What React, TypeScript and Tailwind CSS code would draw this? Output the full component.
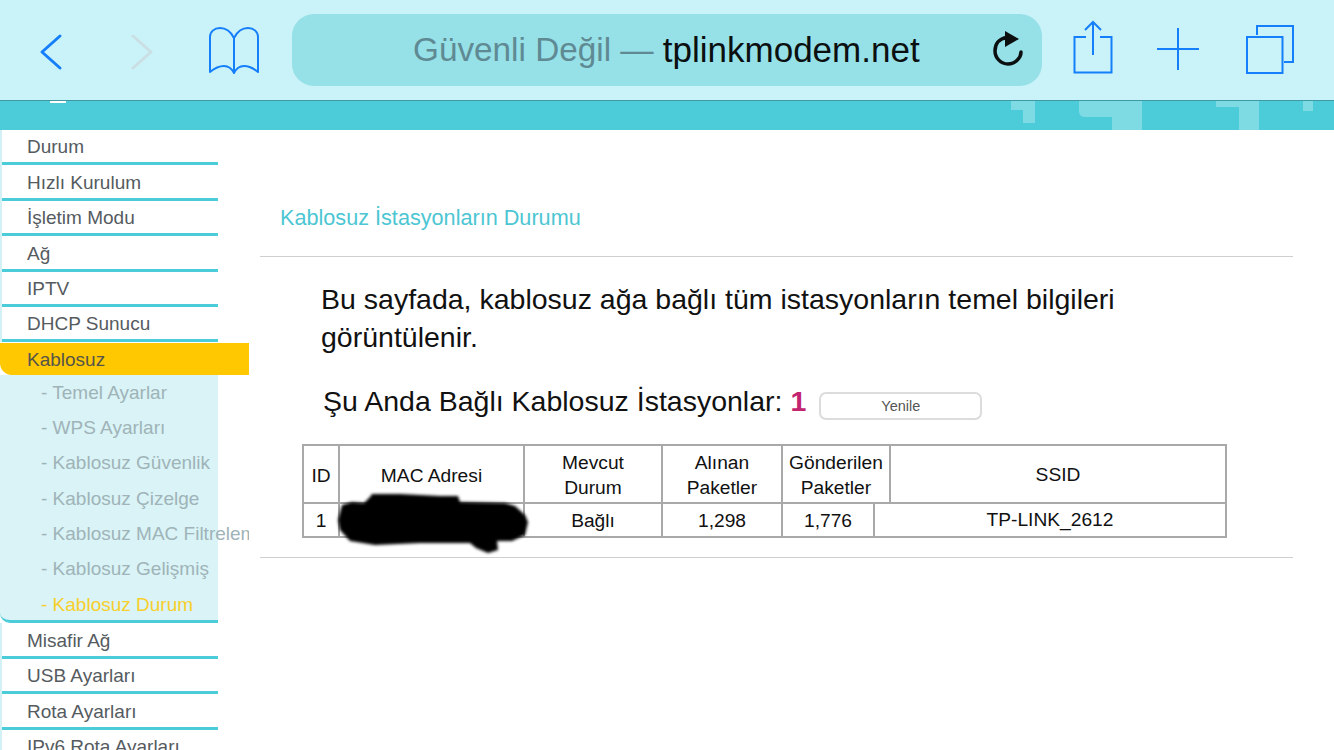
const topItems = ['Durum', 'Hızlı Kurulum', 'İşletim Modu', 'Ağ', 'IPTV', 'DHCP Sunucu']
const subItems = ['Temel Ayarlar', 'WPS Ayarları', 'Kablosuz Güvenlik', 'Kablosuz Çizelge', 'Kablosuz MAC Filtreleme', 'Kablosuz Gelişmiş']
const bottomItems = ['Misafir Ağ', 'USB Ayarları', 'Rota Ayarları', 'IPv6 Rota Ayarları']

function Toolbar() {
  return (
    <div className="relative h-[101px] shrink-0 border-b border-[#3f9aa6] bg-[#c9f3f8]">
      <svg className="absolute inset-0" width="1334" height="100" fill="none" stroke="#147efb" strokeWidth="2">
        {/* back / forward */}
        <path d="M60 36 42 52 60 68" strokeWidth="3" strokeLinecap="round" strokeLinejoin="round" />
        <path d="M133 36 151 52 133 68" stroke="#cadfe4" strokeWidth="3" strokeLinecap="round" strokeLinejoin="round" />
        {/* bookmarks */}
        <path d="M234 38c-3-6-8-10-14-10-6 0-10 4-10 9v35c6-5 10-6 14-6 5 0 8 3 10 7 2-4 5-7 10-7 4 0 8 1 14 6V37c0-5-4-9-10-9-6 0-11 4-14 10Zm0 0v35" strokeLinejoin="round" />
        {/* share */}
        <path d="M1086 37h-11.500v35.500h37V37H1100" />
        <path d="M1093 55V23M1085 30l8-8 8 8" />
        {/* new tab */}
        <path d="M1178 28v42M1157 49h42" />
        {/* tabs */}
        <path d="M1247 37h35.500v36H1247z" />
        <path d="M1257 35V26h36v36h-9" />
      </svg>
      <div className="absolute left-[292px] top-[14px] flex h-[72px] w-[750px] items-center rounded-[22px] bg-[#96e0e7] pl-[121px] font-['Liberation_Sans',sans-serif]">
        <span className="text-[33.300px] text-[#5f8a93]">Güvenli Değil —&nbsp;</span>
        <span className="text-[35px] text-[#0b0f10]">tplinkmodem.net</span>
        <svg className="absolute left-[700px] top-[16px]" width="36" height="40" viewBox="0 0 36 40" fill="none">
          <path d="M15 7.500C7 8.500 3 14 3 21c0 7 6 13 13 13s13-6 13-12" stroke="#0b0f10" strokeWidth="3.500" strokeLinecap="round" />
          <path d="M13 1l14 8-14 8z" fill="#0b0f10" />
        </svg>
      </div>
    </div>
  )
}

function HeaderBand() {
  return (
    <div className="relative h-[29px] shrink-0 bg-[#4cccd8]">
      <div className="absolute left-[50px] top-0 h-[2px] w-[16px] bg-white" />
      <svg className="absolute inset-0" width="1334" height="29" fill="#7fdbe3">
        <path d="M1011 0h24v22h-12V9h-12z" />
        <path d="M1079 0h63v29h-30V16h-27q-6 0-6-6z" />
        <path d="M1216 0h43v29h-20V6h-23z" />
        <path d="M1303 0h10v10h-10z" />
      </svg>
    </div>
  )
}

function MenuRow({ label }: { label: string }) {
  return (
    <div className="flex h-[35.400px] w-[216px] items-center border-b-[3px] border-[#4cccd8] bg-white pl-[25px] pt-[3px] text-[#555b60]">
      {label}
    </div>
  )
}

function Sidebar() {
  return (
    <div className="w-[249px] shrink-0 overflow-hidden font-['Liberation_Sans',sans-serif] text-[19px]">
      <div className="border-l-2 border-[#d3f1f5]">
        {topItems.map((t) => (
          <MenuRow key={t} label={t} />
        ))}
      </div>
      <div className="mt-[1px] flex h-[32px] w-[249px] items-center rounded-bl-[12px] bg-[#ffc800] pl-[27px] pt-[1px] text-[#55544a]">Kablosuz</div>
      <div className="h-[248px] w-[218px] rounded-bl-[10px] border-b-[3px] border-[#4cccd8] bg-[#d9f3f6] text-[#9fb3b8]">
        {subItems.map((t) => (
          <div key={t} className="flex h-[35.300px] w-[249px] items-center whitespace-nowrap pl-[41px]">
            - {t}
          </div>
        ))}
        <div className="flex h-[35.300px] items-center whitespace-nowrap pl-[41px] text-[#f8cf2c]">- Kablosuz Durum</div>
      </div>
      <div className="border-l-2 border-[#d3f1f5]">
        {bottomItems.map((t) => (
          <MenuRow key={t} label={t} />
        ))}
      </div>
    </div>
  )
}

const cell = 'flex h-full shrink-0 items-center justify-center border-r-2 border-[#a9a9a9] text-center leading-[25px]'

function StationTable() {
  return (
    <div className="relative ml-[42px] mt-[27px] w-[925px] border-2 border-[#a9a9a9] text-[19.200px] text-[#111]">
      <div className="flex h-[58px] border-b-2 border-[#a9a9a9] pt-[0px]">
        <div className={`${cell} w-[36px] pt-[2px]`}>ID</div>
        <div className={`${cell} w-[185px] pt-[2px]`}>MAC Adresi</div>
        <div className={`${cell} w-[138px] pt-[2px]`}>Mevcut<br />Durum</div>
        <div className={`${cell} w-[120px] pt-[2px]`}>Alınan<br />Paketler</div>
        <div className={`${cell} w-[108px] pt-[2px]`}>Gönderilen<br />Paketler</div>
        <div className="flex flex-1 items-center justify-center pt-[2px]">SSID</div>
      </div>
      <div className="flex h-[32px]">
        <div className={`${cell} w-[36px]`}>1</div>
        <div className={`${cell} w-[185px]`} />
        <div className={`${cell} w-[138px]`}>Bağlı</div>
        <div className={`${cell} w-[120px]`}>1,298</div>
        <div className={`${cell} w-[92px]`}>1,776</div>
        <div className="flex flex-1 items-center justify-center">TP-LINK_2612</div>
      </div>
      {/* scribble over the MAC address */}
      <svg className="absolute left-[16px] top-[44px] blur-[1.500px]" width="220" height="70" viewBox="320 490 220 70" fill="#000">
        <path d="M338 520 342 505 352 502 364 503 370 497 372 494 400 494 440 496 458 496 460 502 505 503 515 506 525 515 528 522 525 535 512 541 497 541 498 550 488 553 476 548 470 543 420 543 375 545 350 541 340 530z" />
      </svg>
    </div>
  )
}

export default function App() {
  return (
    <div className="flex h-[750px] w-[1334px] flex-col overflow-hidden bg-white font-['Liberation_Sans',sans-serif]">
      <Toolbar />
      <HeaderBand />
      <div className="flex min-h-0 flex-1">
        <Sidebar />
        <div className="min-w-0 flex-1 pl-[11px]">
          <h1 className="ml-[20px] mt-[75px] text-[21.650px] leading-[25px] text-[#4cc6d3]">Kablosuz İstasyonların Durumu</h1>
          <div className="mr-[41px] mt-[26px] border-t border-[#cfcfcf]" />
          <p className="ml-[61px] mt-[23px] w-[830px] text-[28.500px] leading-[38px] text-[#111]">
            Bu sayfada, kablosuz ağa bağlı tüm istasyonların temel bilgileri görüntülenir.
          </p>
          <div className="ml-[63px] mt-[29px] flex h-[32px] items-center text-[28.500px] text-[#111]">
            <span>Şu Anda Bağlı Kablosuz İstasyonlar:</span>
            <b className="ml-[8px] text-[#c2246f]">1</b>
            <button className="ml-[13px] mt-[10px] h-[28px] w-[163px] rounded-[7px] border-2 border-[#dcdcdc] bg-white pt-[1px] text-[14.500px] text-[#555]">
              Yenile
            </button>
          </div>
          <StationTable />
          <div className="mr-[41px] mt-[19px] border-t border-[#cfcfcf]" />
        </div>
      </div>
    </div>
  )
}
